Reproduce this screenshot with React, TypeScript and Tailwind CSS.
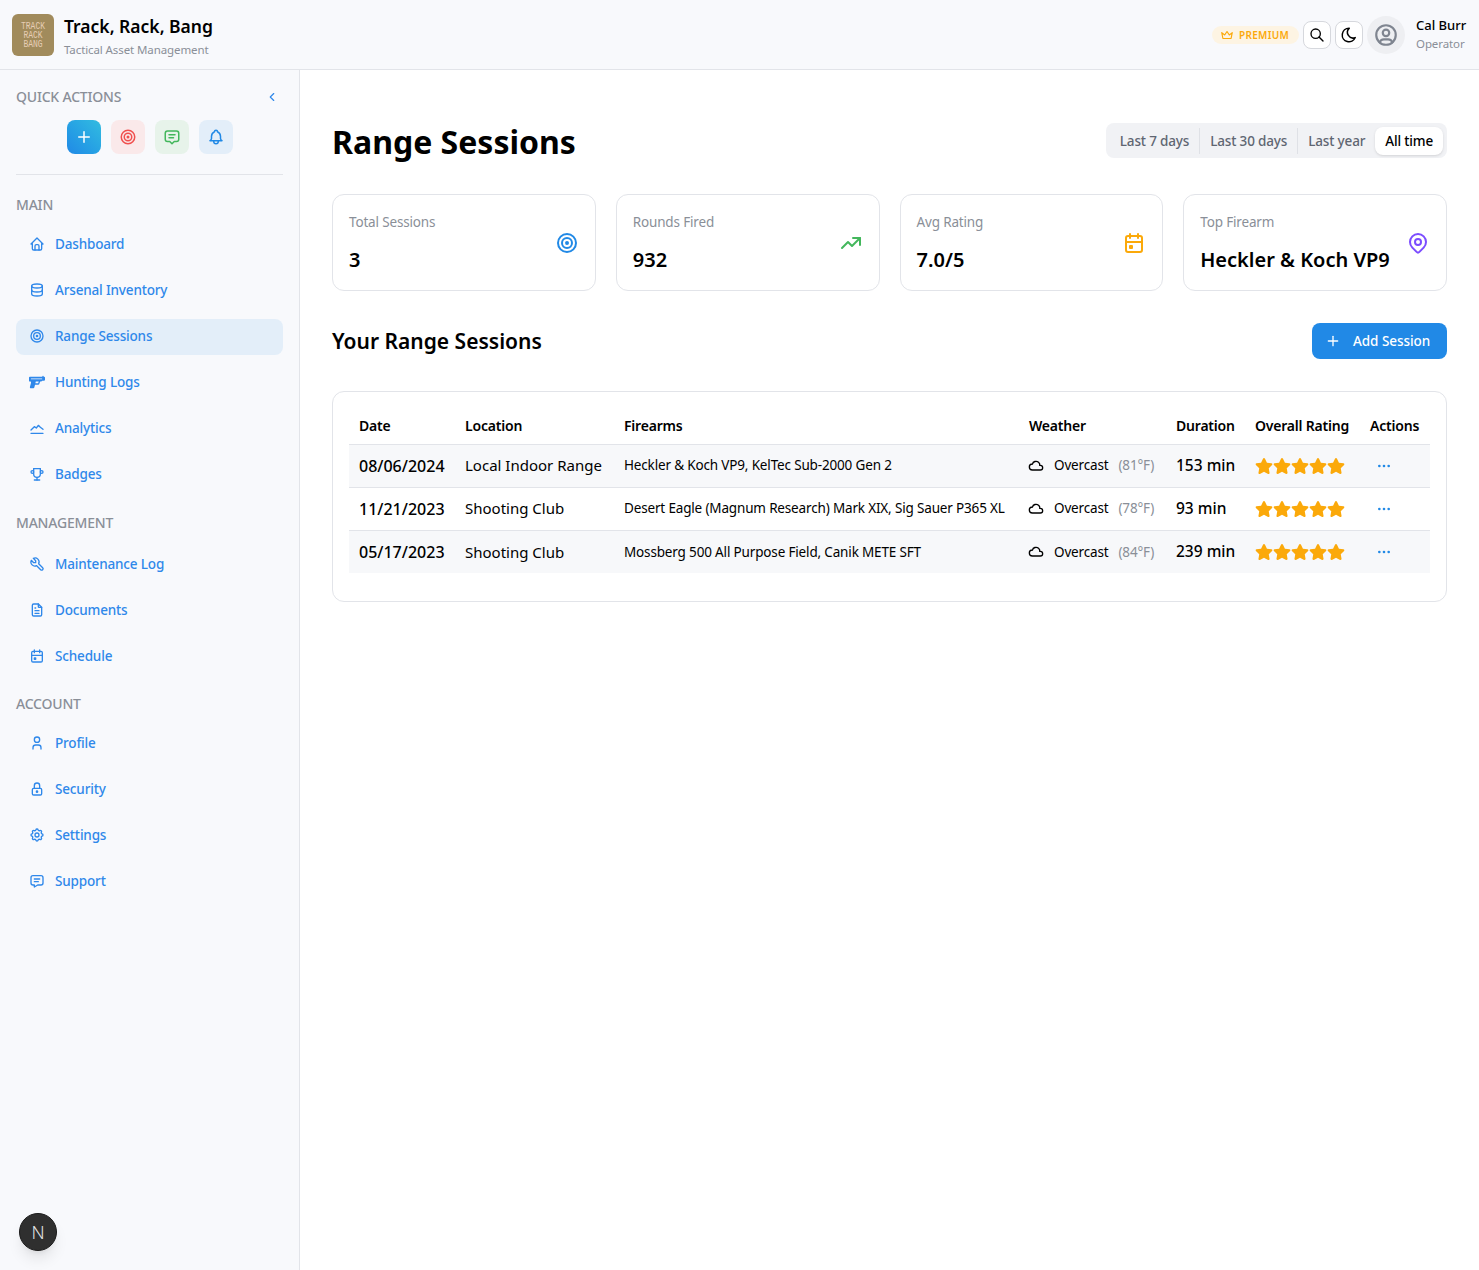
import {
  TbBell, TbCalendarEvent, TbChevronLeft, TbCloud, TbCrown, TbDatabase, TbDots, TbFileText,
  TbHome, TbLock, TbMapPin, TbMessage, TbMessage2, TbMoon, TbPlus, TbSearch, TbSettings, TbTarget, TbTool,
  TbTrendingUp, TbTrophy, TbUser, TbUserCircle,
} from "react-icons/tb";
import { FaGun } from "react-icons/fa6";
import { FaStar } from "react-icons/fa";

// analytics glyph: line over a baseline
const AnalyticsIcon = ({ className }: { className?: string }) => (
  <svg viewBox="0 0 24 24" fill="none" stroke="currentColor" strokeWidth="2" strokeLinecap="round" strokeLinejoin="round" className={className}>
    <path d="M3 20h18" />
    <path d="M3 15l5-5 3 2 3-4 3 3 4 3" />
  </svg>
);

const navMain = [
  { label: "Dashboard", icon: TbHome },
  { label: "Arsenal Inventory", icon: TbDatabase },
  { label: "Range Sessions", icon: TbTarget, active: true },
  { label: "Hunting Logs", icon: FaGun },
  { label: "Analytics", icon: AnalyticsIcon },
  { label: "Badges", icon: TbTrophy },
];
const navManagement = [
  { label: "Maintenance Log", icon: TbTool },
  { label: "Documents", icon: TbFileText },
  { label: "Schedule", icon: TbCalendarEvent },
];
const navAccount = [
  { label: "Profile", icon: TbUser },
  { label: "Security", icon: TbLock },
  { label: "Settings", icon: TbSettings },
  { label: "Support", icon: TbMessage },
];

const stats = [
  { label: "Total Sessions", value: "3", icon: TbTarget, color: "text-[#2189e6]" },
  { label: "Rounds Fired", value: "932", icon: TbTrendingUp, color: "text-[#43b75c]" },
  { label: "Avg Rating", value: "7.0/5", icon: TbCalendarEvent, color: "text-[#fba90a]" },
  { label: "Top Firearm", value: "Heckler & Koch VP9", icon: TbMapPin, color: "text-[#7c4dff]" },
];

const sessions = [
  { date: "08/06/2024", location: "Local Indoor Range", firearms: "Heckler & Koch VP9, KelTec Sub-2000 Gen 2", temp: "(81°F)", duration: "153 min" },
  { date: "11/21/2023", location: "Shooting Club", firearms: "Desert Eagle (Magnum Research) Mark XIX, Sig Sauer P365 XL", temp: "(78°F)", duration: "93 min" },
  { date: "05/17/2023", location: "Shooting Club", firearms: "Mossberg 500 All Purpose Field, Canik METE SFT", temp: "(84°F)", duration: "239 min" },
];

const NavList = ({ items }: { items: typeof navMain }) => (
  <div className="flex flex-col gap-2.5">
    {items.map((item) => (
      <div
        key={item.label}
        className={"flex h-9 items-center gap-2.5 rounded-lg pb-0.5 pl-[13px] text-[13.5px] font-medium tracking-[-0.16px] text-[#2f88ea] " + (item.active ? "bg-[#e3eef9]" : "")}
      >
        <item.icon className="h-4 w-4 shrink-0" />
        <span>{item.label}</span>
      </div>
    ))}
  </div>
);

const SectionLabel = ({ children }: { children: string }) => (
  <div className="text-[14px] leading-5 font-medium tracking-[-0.2px] text-[#8a8f98] uppercase">{children}</div>
);

const Header = () => (
  <header className="flex h-[70px] shrink-0 items-center justify-between border-b border-[#e2e4e9] bg-[#f8f9fc] pr-3 pl-3">
    <div className="flex items-center gap-2.5">
      <div className="flex h-[42px] w-[42px] flex-col items-center justify-center rounded-md bg-[#a18b5c] font-['Liberation_Mono',monospace] text-[8px] leading-[7px] text-[#e6cdb4]">
        <div className="flex scale-y-[1.3] flex-col items-center">
          <span>TRACK</span>
          <span>RACK</span>
          <span>BANG</span>
        </div>
      </div>
      <div className="pt-1">
        <div className="text-[17.5px] leading-6 font-semibold text-black">Track, Rack, Bang</div>
        <div className="mt-[3px] text-[11.5px] leading-[18px] tracking-[-0.1px] text-[#8a8f98]">Tactical Asset Management</div>
      </div>
    </div>
    <div className="flex items-center">
      <div className="flex h-[18px] items-center gap-[5px] rounded-full bg-[#fdf4e3] pt-px pr-2.5 pl-2 text-[10px] font-semibold tracking-[0.3px] text-[#fba90a]">
        <TbCrown className="h-3.5 w-3.5" />
        PREMIUM
      </div>
      <div className="ml-1 flex h-7 w-7 items-center justify-center rounded-lg border border-[#d6d8dd] bg-white">
        <TbSearch className="h-4 w-4 text-black" />
      </div>
      <div className="ml-1 flex h-7 w-7 items-center justify-center rounded-lg border border-[#d6d8dd] bg-white">
        <TbMoon className="h-[18px] w-[18px] text-black" />
      </div>
      <div className="ml-1 flex h-[38px] w-[38px] items-center justify-center rounded-full bg-[#eeeff2]">
        <TbUserCircle className="h-[26px] w-[26px] text-[#7f8590]" />
      </div>
      <div className="ml-[11px] w-[51px]">
        <div className="text-[13px] leading-[18px] font-medium text-black">Cal Burr</div>
        <div className="mt-px text-[11.5px] leading-[18px] tracking-[-0.1px] text-[#8a8f98]">Operator</div>
      </div>
    </div>
  </header>
);

const Sidebar = () => (
  <aside className="w-[300px] shrink-0 border-r border-[#e2e4e9] bg-[#f8f9fc] px-4 pt-[17px]">
    <div className="flex items-center justify-between pr-1">
      <SectionLabel>Quick Actions</SectionLabel>
      <TbChevronLeft className="h-3.5 w-3.5 text-[#2f88ea]" />
    </div>
    <div className="mt-[13px] flex justify-center gap-2.5 border-b border-[#e2e4e9] pb-5">
      <div className="flex h-[34px] w-[34px] items-center justify-center rounded-lg bg-gradient-to-tr from-[#2189e6] to-[#33bce0]">
        <TbPlus className="h-[18px] w-[18px] text-white" />
      </div>
      <div className="flex h-[34px] w-[34px] items-center justify-center rounded-lg bg-[#fae9ea]">
        <TbTarget className="h-[18px] w-[18px] text-[#f0504f]" />
      </div>
      <div className="flex h-[34px] w-[34px] items-center justify-center rounded-lg bg-[#e7f3ea]">
        <TbMessage2 className="h-[18px] w-[18px] text-[#43b75c]" />
      </div>
      <div className="flex h-[34px] w-[34px] items-center justify-center rounded-lg bg-[#e3eef9]">
        <TbBell className="h-[18px] w-[18px] text-[#2189e6]" />
      </div>
    </div>
    <div className="mt-5">
      <SectionLabel>Main</SectionLabel>
      <div className="mt-3">
        <NavList items={navMain} />
      </div>
    </div>
    <div className="mt-5">
      <SectionLabel>Management</SectionLabel>
      <div className="mt-3.5">
        <NavList items={navManagement} />
      </div>
    </div>
    <div className="mt-[19px]">
      <SectionLabel>Account</SectionLabel>
      <div className="mt-3">
        <NavList items={navAccount} />
      </div>
    </div>
  </aside>
);

const Stars = () => (
  <div className="flex">
    {[0, 1, 2, 3, 4].map((i) => (
      <FaStar key={i} className="h-[18px] w-[18px] text-[#fba90a]" />
    ))}
  </div>
);

const Th = ({ children }: { children: string }) => (
  <th className="h-9 pl-2.5 text-left text-[14px] font-semibold tracking-[-0.2px] text-black">{children}</th>
);

const SessionsTable = () => (
  <div className="mt-8 rounded-xl border border-[#e2e4e9] bg-white px-4 pt-4 pb-7">
    <table className="w-full table-fixed border-collapse">
      <colgroup>
        <col className="w-[106px]" />
        <col className="w-[159px]" />
        <col className="w-[405px]" />
        <col className="w-[147px]" />
        <col className="w-[79px]" />
        <col className="w-[115px]" />
        <col className="w-[70px]" />
      </colgroup>
      <thead>
        <tr className="border-b border-[#e2e4e9]">
          {["Date", "Location", "Firearms", "Weather", "Duration", "Overall Rating", "Actions"].map((h) => (
            <Th key={h}>{h}</Th>
          ))}
        </tr>
      </thead>
      <tbody>
        {sessions.map((s, i) => (
          <tr key={s.date} className={(i % 2 === 0 ? "bg-[#f7f8fa] " : "") + (i < 2 ? "border-b border-[#e2e4e9]" : "")}>
            <td className="h-[43px] pl-2.5 text-[16px] font-medium whitespace-nowrap text-black">{s.date}</td>
            <td className="pl-2.5 text-[15px] whitespace-nowrap text-black">{s.location}</td>
            <td className="pl-2.5 text-[13.5px] tracking-[-0.16px] whitespace-nowrap text-black">{s.firearms}</td>
            <td className="pl-2.5">
              <div className="flex items-center text-[13.5px] tracking-[-0.16px] whitespace-nowrap">
                <TbCloud className="-ml-px h-4 w-4 text-black" />
                <span className="ml-2.5 text-black">Overcast</span>
                <span className="ml-2.5 text-[#8a8f98]">{s.temp}</span>
              </div>
            </td>
            <td className="pl-2.5 text-[15.5px] font-medium whitespace-nowrap text-black">{s.duration}</td>
            <td className="pl-2.5">
              <Stars />
            </td>
            <td className="pl-2.5">
              <TbDots className="ml-1.5 h-4 w-4 text-[#2189e6]" />
            </td>
          </tr>
        ))}
      </tbody>
    </table>
  </div>
);

export default function App() {
  return (
    <div className="relative flex min-h-screen flex-col bg-white font-['Noto_Sans',sans-serif]">
      <Header />
      <div className="flex flex-1">
        <Sidebar />
        <main className="flex-1 px-8 pt-[53px]">
          <div className="flex items-start justify-between">
            <h1 className="text-[32px] leading-[38px] font-bold text-black">Range Sessions</h1>
            <div className="flex h-[35px] items-center rounded-lg bg-[#f1f2f5] pr-1 pl-1 text-[13.5px] font-medium tracking-[-0.16px] text-[#5f6672]">
              <span className="border-r border-[#dfe1e6] px-2.5 leading-[26px]">Last 7 days</span>
              <span className="border-r border-[#dfe1e6] px-2.5 leading-[26px]">Last 30 days</span>
              <span className="px-2.5 leading-[26px]">Last year</span>
              <span className="rounded-lg bg-white px-2.5 leading-7 text-black shadow-sm">All time</span>
            </div>
          </div>
          <div className="mt-[33px] grid grid-cols-4 gap-5">
            {stats.map((s) => (
              <div key={s.label} className="flex h-[97px] items-center justify-between rounded-xl border border-[#e2e4e9] bg-white px-4">
                <div>
                  <div className="text-[13.5px] leading-5 tracking-[-0.16px] text-[#8a8f98]">{s.label}</div>
                  <div className="mt-3.5 text-[20px] leading-7 font-semibold whitespace-nowrap text-black">{s.value}</div>
                </div>
                <s.icon className={"h-6 w-6 shrink-0 " + s.color} />
              </div>
            ))}
          </div>
          <div className="mt-8 flex items-center justify-between">
            <h2 className="text-[21px] leading-8 font-semibold text-black">Your Range Sessions</h2>
            <div className="flex h-9 w-[135px] items-center gap-3 rounded-lg bg-[#2189e6] pl-[13px] text-[13.5px] font-medium tracking-[-0.05px] text-white">
              <TbPlus className="h-4 w-4" />
              Add Session
            </div>
          </div>
          <SessionsTable />
        </main>
      </div>
      <div className="absolute top-[1213px] left-[19px] flex h-[38px] w-[38px] items-center justify-center rounded-full border border-[#1a1a1a] bg-[#2f2f2f] text-[18px] font-light text-[#e5e5e5] shadow-lg">
        N
      </div>
    </div>
  );
}
